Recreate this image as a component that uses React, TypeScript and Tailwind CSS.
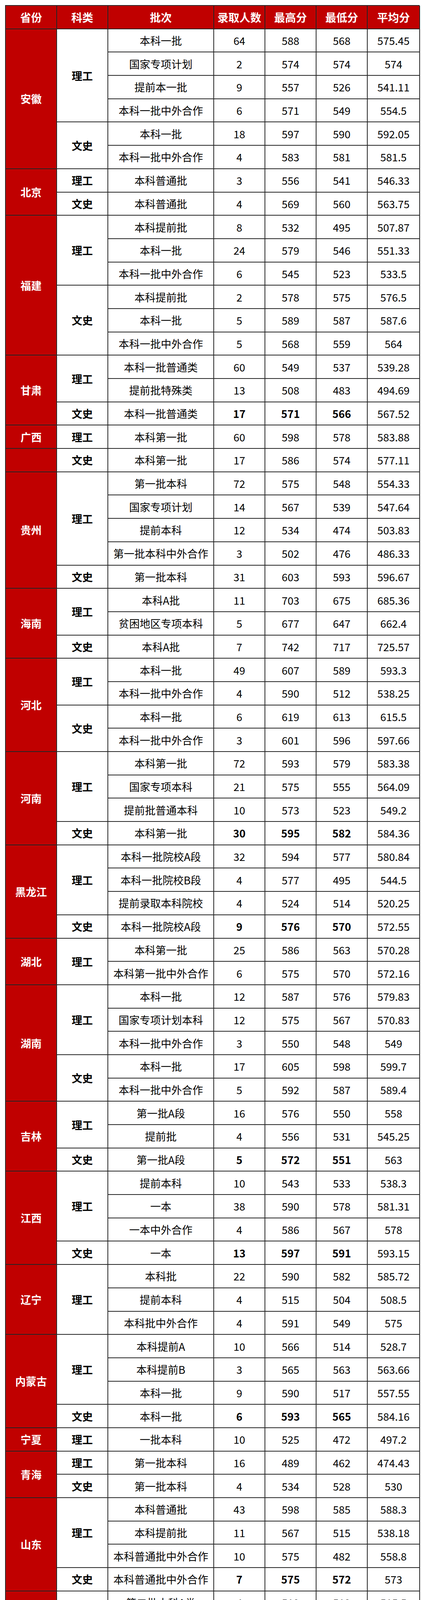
import React from "react";

type G = { k: string; rows: string[] };
type P = { name: string; split?: boolean; groups: G[] };

const DATA: P[] = [
  { name: "安徽", groups: [
    { k: "理工", rows: ["本科一批 64 588 568 575.45", "国家专项计划 2 574 574 574", "提前本一批 9 557 526 541.11", "本科一批中外合作 6 571 549 554.5"] },
    { k: "文史", rows: ["本科一批 18 597 590 592.05", "本科一批中外合作 4 583 581 581.5"] },
  ] },
  { name: "北京", groups: [
    { k: "理工", rows: ["本科普通批 3 556 541 546.33"] },
    { k: "文史", rows: ["本科普通批 4 569 560 563.75"] },
  ] },
  { name: "福建", groups: [
    { k: "理工", rows: ["本科提前批 8 532 495 507.87", "本科一批 24 579 546 551.33", "本科一批中外合作 6 545 523 533.5"] },
    { k: "文史", rows: ["本科提前批 2 578 575 576.5", "本科一批 5 589 587 587.6", "本科一批中外合作 5 568 559 564"] },
  ] },
  { name: "甘肃", groups: [
    { k: "理工", rows: ["本科一批普通类 60 549 537 539.28", "提前批特殊类 13 508 483 494.69"] },
    { k: "文史", rows: ["本科一批普通类 17 571 566 567.52 b"] },
  ] },
  { name: "广西", split: true, groups: [
    { k: "理工", rows: ["本科第一批 60 598 578 583.88"] },
    { k: "文史", rows: ["本科第一批 17 586 574 577.11"] },
  ] },
  { name: "贵州", groups: [
    { k: "理工", rows: ["第一批本科 72 575 548 554.33", "国家专项计划 14 567 539 547.64", "提前本科 12 534 474 503.83", "第一批本科中外合作 3 502 476 486.33"] },
    { k: "文史", rows: ["第一批本科 31 603 593 596.67"] },
  ] },
  { name: "海南", groups: [
    { k: "理工", rows: ["本科A批 11 703 675 685.36", "贫困地区专项本科 5 677 647 662.4"] },
    { k: "文史", rows: ["本科A批 7 742 717 725.57"] },
  ] },
  { name: "河北", groups: [
    { k: "理工", rows: ["本科一批 49 607 589 593.3", "本科一批中外合作 4 590 512 538.25"] },
    { k: "文史", rows: ["本科一批 6 619 613 615.5", "本科一批中外合作 3 601 596 597.66"] },
  ] },
  { name: "河南", groups: [
    { k: "理工", rows: ["本科第一批 72 593 579 583.38", "国家专项本科 21 575 555 564.09", "提前批普通本科 10 573 523 549.2"] },
    { k: "文史", rows: ["本科第一批 30 595 582 584.36 b"] },
  ] },
  { name: "黑龙江", groups: [
    { k: "理工", rows: ["本科一批院校A段 32 594 577 580.84", "本科一批院校B段 4 577 495 544.5", "提前录取本科院校 4 524 514 520.25"] },
    { k: "文史", rows: ["本科一批院校A段 9 576 570 572.55 b"] },
  ] },
  { name: "湖北", groups: [
    { k: "理工", rows: ["本科第一批 25 586 563 570.28", "本科第一批中外合作 6 575 570 572.16"] },
  ] },
  { name: "湖南", groups: [
    { k: "理工", rows: ["本科一批 12 587 576 579.83", "国家专项计划本科 12 575 567 570.83", "本科一批中外合作 3 550 548 549"] },
    { k: "文史", rows: ["本科一批 17 605 598 599.7", "本科一批中外合作 5 592 587 589.4"] },
  ] },
  { name: "吉林", groups: [
    { k: "理工", rows: ["第一批A段 16 576 550 558", "提前批 4 556 531 545.25"] },
    { k: "文史", rows: ["第一批A段 5 572 551 563 b"] },
  ] },
  { name: "江西", groups: [
    { k: "理工", rows: ["提前本科 10 543 533 538.3", "一本 38 590 578 581.31", "一本中外合作 4 586 567 578"] },
    { k: "文史", rows: ["一本 13 597 591 593.15 b"] },
  ] },
  { name: "辽宁", groups: [
    { k: "理工", rows: ["本科批 22 590 582 585.72", "提前本科 4 515 504 508.5", "本科批中外合作 4 591 549 575"] },
  ] },
  { name: "内蒙古", groups: [
    { k: "理工", rows: ["本科提前A 10 566 514 528.7", "本科提前B 3 565 563 563.66", "本科一批 9 590 517 557.55"] },
    { k: "文史", rows: ["本科一批 6 593 565 584.16 b"] },
  ] },
  { name: "宁夏", groups: [
    { k: "理工", rows: ["一批本科 10 525 472 497.2"] },
  ] },
  { name: "青海", groups: [
    { k: "理工", rows: ["第一批本科 16 489 462 474.43"] },
    { k: "文史", rows: ["第一批本科 4 534 528 530"] },
  ] },
  { name: "山东", groups: [
    { k: "理工", rows: ["本科普通批 43 598 585 588.3", "本科提前批 11 567 515 538.18", "本科普通批中外合作 10 575 482 558.8"] },
    { k: "文史", rows: ["本科普通批中外合作 7 575 572 573 b"] },
  ] },
  { name: "山西", groups: [
    { k: "理工", rows: ["第二批本科A类 4 519 512 515.5", "第一批本科A类 3 566 562 564.33", "第一批本科B类 49 555 542 546.73"] },
    { k: "文史", rows: ["第一批本科B类 14 570 564 566.71 b"] },
  ] },
  { name: "陕西", groups: [
    { k: "理工", rows: ["本科一批 42 578 559 565.04", "单设本科 14 559 551 554.35"] },
    { k: "文史", rows: ["本科一批 9 595 584 586.66 b"] },
  ] },
  { name: "四川", groups: [
    { k: "理工", rows: ["本科提前批 10 605 558 582.8", "本科一批 37 631 619 622.56", "国家专项 2 616 611 613.5", "本科一批中外合作 5 592 587 589.6"] },
    { k: "文史", rows: ["本科一批 8 594 587 591.5", "本科一批中外合作 6 584 568 572.5"] },
  ] },
  { name: "天津", groups: [
    { k: "理工", rows: ["本科批次A阶段 18 602 566 576.27 b"] },
    { k: "文史", rows: ["本科批次A阶段 7 577 555 561.57 b"] },
  ] },
  { name: "新疆", groups: [
    { k: "理工", rows: ["本科第一批 23 527 502 509.17 b"] },
    { k: "文史", rows: ["本科第一批 5 566 531 551.6 b"] },
  ] },
  { name: "云南", groups: [
    { k: "理工", rows: ["一本 44 623 567 595.95", "一本中外合作 3 571 558 566.33"] },
    { k: "文史", rows: ["一本 7 609 600 603.28", "一本中外合作 3 599 587 592.33"] },
  ] },
  { name: "重庆", groups: [
    { k: "理工", rows: ["本科第一批 25 596 573 583.44", "贫困专项本科批 7 579 572 574.85", "本科第一批中外合作 3 552 545 548.66"] },
    { k: "文史", rows: ["本科第一批 9 588 582 584", "本科第一批中外合作 2 574 565 569.5"] },
  ] },
];

const base =
  "flex items-center justify-center border-r-2 border-b-2 border-[#262626] text-[27px] leading-none whitespace-nowrap min-w-0";
const red = `${base} bg-[#c00000] text-white font-bold`;
const white = `${base} bg-white text-black`;

const COLS = ["col-start-1", "col-start-2", "col-start-3", "col-start-4", "col-start-5", "col-start-6", "col-start-7"];
const SPANS: Record<number, string> = {
  1: "row-span-1",
  2: "row-span-2",
  3: "row-span-3",
  4: "row-span-4",
  5: "row-span-5",
  6: "row-span-6",
};

export default function App() {
  const cells: React.ReactNode[] = [];
  const heads = ["省份", "科类", "批次", "录取人数", "最高分", "最低分", "平均分"];
  heads.forEach((h, i) => {
    cells.push(
      <div key={`h${i}`} className={`${red} ${COLS[i]} text-[28px]`}>
        {h}
      </div>
    );
  });

  let key = 0;
  DATA.forEach((p) => {
    const total = p.groups.reduce((s, g) => s + g.rows.length, 0);
    p.groups.forEach((g, gi) => {
      g.rows.forEach((r, ri) => {
        if (ri === 0 && (p.split || gi === 0)) {
          const n = p.split ? g.rows.length : total;
          cells.push(
            <div key={`p${key++}`} className={`${red} ${COLS[0]} ${SPANS[n]}`}>
              {gi === 0 ? p.name : ""}
            </div>
          );
        }
        if (ri === 0) {
          cells.push(
            <div key={`k${key++}`} className={`${white} ${COLS[1]} ${SPANS[g.rows.length]} font-bold`}>
              {g.k}
            </div>
          );
        }
        const parts = r.split(" ");
        const bold = parts[5] === "b";
        parts.slice(0, 5).forEach((v, vi) => {
          const isBold = bold && vi >= 1 && vi <= 3;
          cells.push(
            <div key={`c${key++}`} className={`${white} ${COLS[vi + 2]} ${isBold ? "font-bold" : "font-normal"}`}>
              {v}
            </div>
          );
        });
      });
    });
  });

  return (
    <div className="bg-white w-[1080px] pt-[13px] pb-[12px] pl-[13px] font-['Noto_Sans_CJK_SC','Noto_Sans',sans-serif]">
      <div className="grid w-[1061px] grid-cols-[131px_131px_271px_131px_131px_131px_134px] auto-rows-[59.7px] border-t-2 border-l-2 border-[#262626]">
        {cells}
      </div>
    </div>
  );
}
